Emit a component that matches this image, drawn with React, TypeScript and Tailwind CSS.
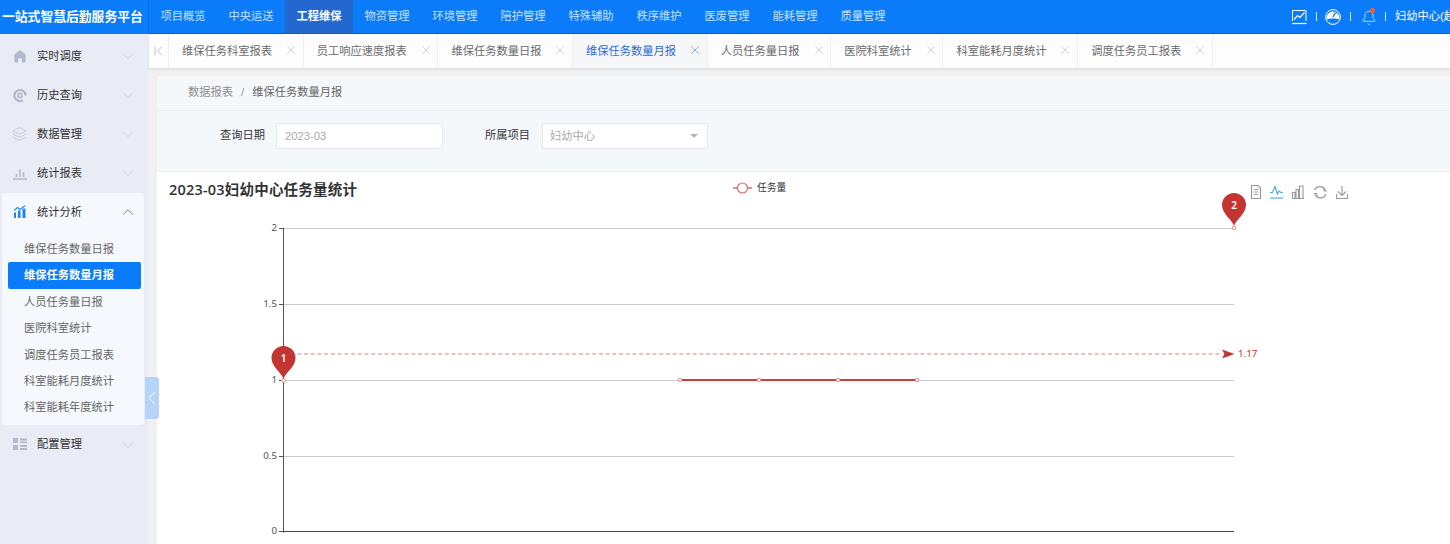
import React from "react";
import { ChevronDown, ChevronUp, ChevronLeft, X, Bell, Layers } from "lucide-react";

const FONT = "font-['Liberation_Sans','Noto_Sans_CJK_SC',sans-serif]";

const navs = ["项目概览", "中央运送", "工程维保", "物资管理", "环境管理", "陪护管理", "特殊辅助", "秩序维护", "医废管理", "能耗管理", "质量管理"];
const tabs = ["维保任务科室报表", "员工响应速度报表", "维保任务数量日报", "维保任务数量月报", "人员任务量日报", "医院科室统计", "科室能耗月度统计", "调度任务员工报表"];
const subs = ["维保任务数量日报", "维保任务数量月报", "人员任务量日报", "医院科室统计", "调度任务员工报表", "科室能耗月度统计", "科室能耗年度统计"];

const HomeIcon = () => (
  <svg width="14" height="14" viewBox="0 0 14 14" className="shrink-0">
    <path d="M7 .6 12.600 4.800V13H9V10.500A2 2 0 0 0 5 10.500V13H1.400V4.800Z" fill="#b4b8cc" />
  </svg>
);
const HistoryIcon = () => (
  <svg width="14" height="14" viewBox="0 0 14 14" fill="none" className="shrink-0">
    <path d="M10 11.800A5.600 5.600 0 1 1 12.600 7" stroke="#b4b8cc" strokeWidth="2.300" />
    <circle cx="7" cy="7" r="2.100" stroke="#b4b8cc" strokeWidth="1.600" />
  </svg>
);
const ReportIcon = () => (
  <svg width="14" height="14" viewBox="0 0 14 14" fill="none" className="shrink-0">
    <path d="M0 12.500H14" stroke="#b4b8cc" strokeWidth="1.500" />
    <path d="M3.500 10.500V7.500M7 10.500V3M10.500 10.500V5.500" stroke="#b4b8cc" strokeWidth="1.500" />
  </svg>
);
const GridIcon = () => (
  <svg width="14" height="13" viewBox="0 0 14 13" fill="#b4b8cc" className="shrink-0">
    <rect x="0" y="0" width="5" height="5" />
    <rect x="0" y="7" width="5" height="5" />
    <rect x="7" y="0.500" width="7" height="2" />
    <rect x="7" y="3.500" width="7" height="1.500" />
    <rect x="7" y="7" width="7" height="2" />
    <rect x="7" y="10" width="7" height="2" />
  </svg>
);
const AnalysisIcon = () => (
  <svg width="14" height="14" viewBox="0 0 14 14" fill="none" className="shrink-0">
    <path d="M1 5.500 4.500 2.500 7 4.500 12 .8" stroke="#1f86ee" strokeWidth="1.100" />
    <path d="M1 7.500H3V13H1ZM5 5.500H7.500V13H5ZM9.500 3.500H12.500V13H9.500Z" fill="#1f86ee" />
  </svg>
);

const Row = ({ icon, label, open }: { icon: React.ReactNode; label: string; open?: boolean }) => (
  <div className={open ? "flex items-center h-[38px] pl-[11px] pr-[7px]" : "flex items-center h-[39px] pl-[13px] pr-[12px]"}>
    {icon}
    <span className="ml-[10px] flex-1 text-[11.25px] text-[#333]">{label}</span>
    {open ? <ChevronUp size={18} strokeWidth={1.100} color="#666" /> : <ChevronDown size={18} strokeWidth={0.900} color="#c4c8d6" />}
  </div>
);

export default function App() {
  return (
    <div className={`${FONT} relative w-[1450px] h-[544px] overflow-hidden bg-[#f0f0f0] flex flex-col`}>
      <header className="h-[34px] shrink-0 flex bg-[#0a7cf9]">
        <div className="w-[149px] shrink-0 pl-[2px] h-[34px] flex items-center text-[12.8px] font-bold text-white whitespace-nowrap border-r border-[#0a6fe0]">
          一站式智慧后勤服务平台
        </div>
        <div className="flex-1 flex border-b border-[#3a5675] min-w-0">
          <nav className="flex flex-1">
            {navs.map((n, i) => (
              <div
                key={n}
                className={
                  i === 2
                    ? "w-[68px] h-[33px] flex items-center justify-center text-[11.25px] font-bold text-white bg-[#2367cf]"
                    : "w-[68px] h-[33px] flex items-center justify-center text-[11.25px] text-[#c4e0fc]"
                }
              >
                {n}
              </div>
            ))}
          </nav>
          <div className="w-[159px] shrink-0 flex items-center overflow-hidden text-white">
            <svg width="16" height="16" viewBox="0 0 16 16" fill="none" stroke="#fff" className="shrink-0">
              <path d="M1.500 12V1.500H15V12" strokeWidth="1" />
              <path d="M3 10.500 6.500 6.500 9 8.500 13.500 3.500" strokeWidth="1.200" />
              <path d="M1 14.500H15.500" strokeWidth="1.200" />
            </svg>
            <span className="ml-[9px] w-px h-[9px] bg-[#cfe4fb] shrink-0" />
            <svg width="16" height="16" viewBox="0 0 16 16" className="ml-[8px] shrink-0">
              <circle cx="8" cy="8" r="7.400" fill="none" stroke="#fff" strokeWidth="1" />
              <path d="M1.800 10.500A6.400 6.400 0 1 1 14.200 10.500C11.500 9.300 4.500 9.300 1.800 10.500Z" fill="#fff" />
              <path d="M8 8 10.500 3.500" stroke="#0a7cf9" strokeWidth="1.500" />
            </svg>
            <span className="ml-[9px] w-px h-[9px] bg-[#cfe4fb] shrink-0" />
            <div className="relative ml-[10px] shrink-0 w-[15px] h-[16px]">
              <Bell size={16} strokeWidth={1} color="#fff" className="mt-[1px]" />
              <span className="absolute -top-[1px] left-[9px] w-[5px] h-[5px] rounded-full bg-[#ff5a26]" />
            </div>
            <span className="ml-[9px] w-px h-[9px] bg-[#cfe4fb] shrink-0" />
            <span className="ml-[9px] text-[11.25px] whitespace-nowrap text-white">妇幼中心(超级管理员)</span>
          </div>
        </div>
      </header>

      <div className="flex-1 flex min-h-0">
        <aside className="w-[149px] shrink-0 bg-[#e9ecf5] pt-[2px] flex flex-col">
          <div className="translate-y-[0.5px] flex flex-col">
            <Row icon={<HomeIcon />} label="实时调度" />
            <Row icon={<HistoryIcon />} label="历史查询" />
            <Row icon={<Layers size={15} strokeWidth={1} color="#b4b8cc" className="shrink-0 -ml-px" />} label="数据管理" />
            <Row icon={<ReportIcon />} label="统计报表" />
          </div>
          <div className="ml-[2px] mt-px w-[142px] h-[232px] shrink-0 rounded-[3px] bg-[#f5f8fc]">
            <Row icon={<AnalysisIcon />} label="统计分析" open />
            <div className="mt-[5px] flex flex-col">
              {subs.map((s, i) => (
                <div
                  key={s}
                  className={
                    i === 1
                      ? "ml-[6px] w-[133px] h-[27px] pl-[16px] flex items-center text-[11.25px] font-bold text-white bg-[#0a7cf9] rounded-[2px]"
                      : "ml-[6px] w-[133px] h-[26.3px] pl-[16px] flex items-center text-[11.25px] text-[#666]"
                  }
                >
                  {s}
                </div>
              ))}
            </div>
          </div>
          <Row icon={<GridIcon />} label="配置管理" />
        </aside>

        <main className="flex-1 min-w-0 flex flex-col">
          <div className="h-[35px] shrink-0 flex bg-[#fdfdfd] border-b border-[#e4e4e4] shadow-[0_1px_2px_rgba(0,0,0,0.06)]">
            <div className="w-[20px] shrink-0 flex items-center justify-center border-r border-[#eeeeee]">
              <svg width="9" height="10" viewBox="0 0 9 10" fill="none" stroke="#c4c4c4" strokeWidth="1">
                <path d="M1 .5V9.500M8 .8 3.500 5 8 9.200" />
              </svg>
            </div>
            {tabs.map((t, i) => (
              <div
                key={t}
                className={
                  i === 3
                    ? "pl-[13px] pr-[4.7px] flex items-center border-r border-[#f0f0f0] bg-[#f6f7f8] text-[11.25px] text-[#2b6cd4]"
                    : "pl-[13px] pr-[4.7px] flex items-center border-r border-[#f0f0f0] text-[11.25px] text-[#6b6b6b]"
                }
              >
                <span className="whitespace-nowrap">{t}</span>
                <X size={14} strokeWidth={1.300} color={i === 3 ? "#6a98e4" : "#c6c6c6"} className="ml-[12px] -mt-[3px]" />
              </div>
            ))}
          </div>

          <div className="ml-[8px] mt-[7px] flex-1 min-h-0 flex flex-col bg-[#f5f8fb]">
            <div className="h-[35px] shrink-0 pl-[31px] pb-[1px] flex items-center border-b border-[#e9edf1] text-[11.25px]">
              <span className="text-[#8e8e8e]">数据报表</span>
              <span className="mx-[8px] text-[#999]">/</span>
              <span className="text-[#666]">维保任务数量月报</span>
            </div>
            <div className="h-[61px] shrink-0 flex items-start pt-[12px] border-b border-[#e9edf1] pl-[63px] text-[11.25px] text-[#333]">
              <span className="leading-[24px]">查询日期</span>
              <div className="ml-[11px] w-[167px] h-[26px] flex items-center pl-[8px] bg-white border border-[#e4e7ed] rounded-[2px] text-[#aaa]">
                2023-03
              </div>
              <span className="ml-[42px] leading-[24px]">所属项目</span>
              <div className="ml-[12px] w-[166px] h-[26px] flex items-center justify-between pl-[7px] pr-[9px] bg-white border border-[#e4e7ed] rounded-[2px] text-[#aaa]">
                <span>妇幼中心</span>
                <span className="w-0 h-0 border-x-[4px] border-x-transparent border-t-[4px] border-t-[#b5b5b5]" />
              </div>
            </div>
            <section className="flex-1 min-h-0 bg-white relative overflow-hidden">
              <h2 className="pl-[12px] pt-[8px] text-[14.5px] tracking-[0.2px] leading-[20px] font-semibold text-[#333] font-['Open_Sans','Noto_Sans_CJK_SC',sans-serif]">2023-03妇幼中心任务量统计</h2>
              <svg width="1293" height="372" viewBox="157 172 1293 372" className="absolute left-0 top-0 font-['Noto_Sans','Noto_Sans_CJK_SC',sans-serif]">
                {/* legend */}
                <path d="M733 188H752" stroke="#c23531" strokeOpacity="0.7" strokeWidth="1.500" />
                <circle cx="742.500" cy="188" r="5" fill="#fff" stroke="#c23531" strokeOpacity="0.7" strokeWidth="1.200" />
                <text x="757" y="191" fontSize="9.750" fill="#333">任务量</text>

                {/* toolbox */}
                <g fill="none" stroke="#999" strokeWidth="1.100">
                  <path d="M1251.500 185.500H1258L1260.500 188V198.500H1251.500Z" />
                  <path d="M1253.500 189.500H1258.500M1253.500 192H1258.500M1253.500 194.500H1258.500" />
                  <path d="M1270 192.500H1272.500L1275 186.500 1277.500 194 1279 191 1281 192.500H1283" stroke="#4aa8d8" />
                  <path d="M1270 198H1283" stroke="#4aa8d8" />
                  <path d="M1292.500 198V192.500H1295V198M1296 198V189.500H1298.500V198M1299.500 198V186H1303V198M1292 198.500H1304" />
                  <path d="M1314.500 190A6 6 0 0 1 1325.500 190.500M1326 194A6 6 0 0 1 1315 194.500" strokeWidth="1.200" />
                  <path d="M1324 187.500V191H1327M1317 197.500V193.500H1314" strokeWidth="1" />
                  <path d="M1342 186V195M1338 191.500 1342 195.500 1346 191.500M1336.500 194V198.500H1347.500V194" />
                </g>

                {/* grid */}
                {[228, 304, 380, 456].map((y) => (
                  <path key={y} d={`M284 ${y + 0.5}H1234`} stroke="#cccccc" strokeWidth="1" />
                ))}
                <path d="M283.500 228V532.500" stroke="#555" strokeWidth="1" />
                <path d="M283 531.500H1234" stroke="#444" strokeWidth="1" />
                {[228, 304, 380, 456, 531].map((y) => (
                  <path key={y} d={`M279 ${y + 0.5}H283`} stroke="#555" strokeWidth="1" />
                ))}
                {[["2", 230.500], ["1.5", 306.500], ["1", 382.500], ["0.5", 458.500], ["0", 534]].map(([t, y]) => (
                  <text key={String(t)} x="277" y={Number(y)} fontSize="9.750" fill="#555" textAnchor="end">{t}</text>
                ))}

                {/* mark line */}
                <path d="M284 354H1222" stroke="#c23531" strokeOpacity="0.6" strokeWidth="1.100" strokeDasharray="4 2.700" />
                <path d="M1222 349.500 1234.500 354 1222 358.500 1224.500 354Z" fill="#c23531" />
                <text x="1238" y="357" fontSize="9.750" fill="#c23531">1.17</text>

                {/* series */}
                <path d="M680 380H917" stroke="#c9403c" strokeWidth="2" />
                {[[283.5, 380.5], [680, 380], [759, 380], [838, 380], [917, 380], [1234, 228]].map(([x, y]) => (
                  <circle key={x} cx={x} cy={y} r="1.800" fill="#fff" stroke="#e08a88" strokeWidth="1" />
                ))}

                {/* pins */}
                {[[283.5, 358, "1"], [1234, 205, "2"]].map(([x, y, t]) => (
                  <g key={String(t)} transform={`translate(${x} ${y})`}>
                    <path d="M0 21C-1.500 15-12 9-12 0A12 12 0 0 1 12 0C12 9 1.500 15 0 21Z" fill="#c23531" />
                    <text x="0" y="3.500" fontSize="10" fontWeight="600" fill="#fff" textAnchor="middle">{t}</text>
                  </g>
                ))}
              </svg>
            </section>
          </div>
        </main>
      </div>

      <div className="absolute left-[145px] top-[377px] w-[14px] h-[42px] flex items-center justify-center bg-[#b5d4f7] rounded-r-[3px]">
        <ChevronLeft size={24} strokeWidth={1} color="#ffffff" className="shrink-0" />
      </div>
    </div>
  );
}
